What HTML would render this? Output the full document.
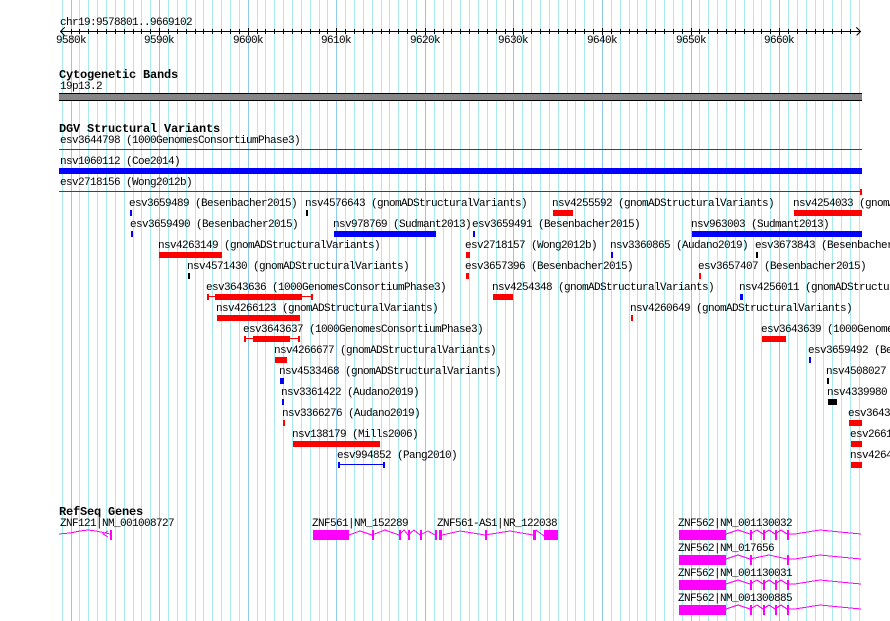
<!DOCTYPE html>
<html><head><meta charset="utf-8"><style>
html,body{margin:0;padding:0;background:#fff;width:890px;height:621px;overflow:hidden}
svg{display:block}
text{font-family:"Liberation Mono",monospace;font-size:11px;letter-spacing:-.6px;fill:#000;transform:translate(-1px,-1px)}
text.b{font-weight:bold;font-size:12px;letter-spacing:-.2px;transform:none}
text.l{transform:translate(0,-1px)}
text.t{transform:none}
.c rect,.c path,.c polyline{shape-rendering:crispEdges}
</style></head><body>
<svg class="c" width="890" height="621" viewBox="0 0 890 621" xmlns="http://www.w3.org/2000/svg">
<rect width="890" height="621" fill="#fff"/>
<path stroke="#a8ecf0" stroke-width="1" fill="none" d="M62.5 0V621M79.5 0V621M88.5 0V621M97.5 0V621M106.5 0V621M115.5 0V621M124.5 0V621M133.5 0V621M141.5 0V621M150.5 0V621M168.5 0V621M177.5 0V621M186.5 0V621M195.5 0V621M203.5 0V621M212.5 0V621M221.5 0V621M230.5 0V621M239.5 0V621M257.5 0V621M265.5 0V621M274.5 0V621M283.5 0V621M292.5 0V621M301.5 0V621M310.5 0V621M319.5 0V621M327.5 0V621M345.5 0V621M354.5 0V621M363.5 0V621M372.5 0V621M381.5 0V621M389.5 0V621M398.5 0V621M407.5 0V621M416.5 0V621M434.5 0V621M443.5 0V621M451.5 0V621M460.5 0V621M469.5 0V621M478.5 0V621M487.5 0V621M496.5 0V621M505.5 0V621M522.5 0V621M531.5 0V621M540.5 0V621M549.5 0V621M558.5 0V621M567.5 0V621M575.5 0V621M584.5 0V621M593.5 0V621M611.5 0V621M620.5 0V621M629.5 0V621M637.5 0V621M646.5 0V621M655.5 0V621M664.5 0V621M673.5 0V621M682.5 0V621M699.5 0V621M708.5 0V621M717.5 0V621M726.5 0V621M735.5 0V621M744.5 0V621M753.5 0V621M761.5 0V621M770.5 0V621M788.5 0V621M797.5 0V621M806.5 0V621M815.5 0V621M823.5 0V621M832.5 0V621M841.5 0V621M850.5 0V621M859.5 0V621"/>
<path stroke="#8fc8ec" stroke-width="1" fill="none" d="M71.5 0V621M159.5 0V621M248.5 0V621M336.5 0V621M425.5 0V621M513.5 0V621M602.5 0V621M691.5 0V621M779.5 0V621"/>

<!-- ruler -->
<rect x="60" y="31" width="801" height="1" fill="#000"/>
<path stroke="#000" fill="none" d="M71.5 29V34M79.5 29V34M88.5 29V34M97.5 29V34M106.5 29V34M115.5 29V34M124.5 29V34M133.5 29V34M141.5 29V34M150.5 29V34M159.5 28V35M168.5 29V34M177.5 29V34M186.5 29V34M195.5 29V34M203.5 29V34M212.5 29V34M221.5 29V34M230.5 29V34M239.5 29V34M248.5 28V35M257.5 29V34M265.5 29V34M274.5 29V34M283.5 29V34M292.5 29V34M301.5 29V34M310.5 29V34M319.5 29V34M327.5 29V34M336.5 28V35M345.5 29V34M354.5 29V34M363.5 29V34M372.5 29V34M381.5 29V34M389.5 29V34M398.5 29V34M407.5 29V34M416.5 29V34M425.5 28V35M434.5 29V34M443.5 29V34M451.5 29V34M460.5 29V34M469.5 29V34M478.5 29V34M487.5 29V34M496.5 29V34M505.5 29V34M513.5 28V35M522.5 29V34M531.5 29V34M540.5 29V34M549.5 29V34M558.5 29V34M567.5 29V34M575.5 29V34M584.5 29V34M593.5 29V34M602.5 28V35M611.5 29V34M620.5 29V34M629.5 29V34M637.5 29V34M646.5 29V34M655.5 29V34M664.5 29V34M673.5 29V34M682.5 29V34M691.5 28V35M699.5 29V34M708.5 29V34M717.5 29V34M726.5 29V34M735.5 29V34M744.5 29V34M753.5 29V34M761.5 29V34M770.5 29V34M779.5 28V35M788.5 29V34M797.5 29V34M806.5 29V34M815.5 29V34M823.5 29V34M832.5 29V34M841.5 29V34M850.5 29V34M60.5 31.5L64.5 27.5M60.5 31.5L64.5 35.5M860.5 31.5L856.5 27.5M860.5 31.5L856.5 35.5"/>
<text class="t" x="60" y="25">chr19:9578801..9669102</text>
<text class="l" x="56" y="44">9580k</text><text class="l" x="144" y="44">9590k</text><text class="l" x="233" y="44">9600k</text><text class="l" x="321" y="44">9610k</text><text class="l" x="410" y="44">9620k</text><text class="l" x="498" y="44">9630k</text><text class="l" x="587" y="44">9640k</text><text class="l" x="676" y="44">9650k</text><text class="l" x="764" y="44">9660k</text>

<!-- cytobands -->
<text class="b" x="59" y="78">Cytogenetic Bands</text>
<text class="l" x="60" y="90">19p13.2</text>
<rect x="59" y="93" width="803" height="8" fill="#000"/>
<rect x="59" y="94" width="803" height="6" fill="#868686"/>

<!-- DGV -->
<text class="b" x="59" y="132">DGV Structural Variants</text>
<text class="l" x="60" y="144">esv3644798 (1000GenomesConsortiumPhase3)</text>
<rect x="59" y="149" width="803" height="1" fill="#e00000"/>
<text class="l" x="60" y="165">nsv1060112 (Coe2014)</text>
<rect x="59" y="168" width="803" height="6" fill="#0000ff"/>
<text class="l" x="60" y="186">esv2718156 (Wong2012b)</text>
<rect x="59" y="191" width="803" height="1" fill="#e00000"/>
<rect x="860" y="189" width="2" height="6" fill="#ff0000"/>

<text x="130" y="207">esv3659489 (Besenbacher2015)</text><rect x="130" y="210" width="2" height="6" fill="#00f"/>
<text x="306" y="207">nsv4576643 (gnomADStructuralVariants)</text><rect x="306" y="210" width="2" height="6" fill="#000"/>
<text x="553" y="207">nsv4255592 (gnomADStructuralVariants)</text><rect x="553" y="210" width="20" height="6" fill="#f00"/>
<text x="794" y="207">nsv4254033 (gnomADStructuralVariants)</text><rect x="794" y="210" width="68" height="6" fill="#f00"/>

<text x="131" y="228">esv3659490 (Besenbacher2015)</text><rect x="131" y="231" width="2" height="6" fill="#00f"/>
<text x="334" y="228">nsv978769 (Sudmant2013)</text><rect x="334" y="231" width="102" height="6" fill="#00f"/>
<text x="473" y="228">esv3659491 (Besenbacher2015)</text><rect x="473" y="231" width="2" height="6" fill="#00f"/>
<text x="692" y="228">nsv963003 (Sudmant2013)</text><rect x="692" y="231" width="170" height="6" fill="#00f"/>

<text x="159" y="249">nsv4263149 (gnomADStructuralVariants)</text><rect x="159" y="252" width="63" height="6" fill="#f00"/>
<text x="466" y="249">esv2718157 (Wong2012b)</text><rect x="466" y="252" width="4" height="6" fill="#f00"/>
<text x="611" y="249">nsv3360865 (Audano2019)</text><rect x="611" y="252" width="2" height="6" fill="#00f"/>
<text x="756" y="249">esv3673843 (Besenbacher2015)</text><rect x="756" y="252" width="2" height="6" fill="#000"/>

<text x="188" y="270">nsv4571430 (gnomADStructuralVariants)</text><rect x="188" y="273" width="2" height="6" fill="#000"/>
<text x="466" y="270">esv3657396 (Besenbacher2015)</text><rect x="466" y="273" width="3" height="6" fill="#f00"/>
<text x="699" y="270">esv3657407 (Besenbacher2015)</text><rect x="699" y="273" width="2" height="6" fill="#f00"/>

<text x="207" y="291">esv3643636 (1000GenomesConsortiumPhase3)</text>
<rect x="208" y="296" width="104" height="1" fill="#f00"/><rect x="207" y="294" width="2" height="6" fill="#f00"/><rect x="311" y="294" width="2" height="6" fill="#f00"/><rect x="215" y="294" width="87" height="6" fill="#f00"/>
<text x="493" y="291">nsv4254348 (gnomADStructuralVariants)</text><rect x="493" y="294" width="20" height="6" fill="#f00"/>
<text x="740" y="291">nsv4256011 (gnomADStructuralVariants)</text><rect x="740" y="294" width="3" height="6" fill="#00f"/>

<text x="217" y="312">nsv4266123 (gnomADStructuralVariants)</text><rect x="217" y="315" width="83" height="6" fill="#f00"/>
<text x="631" y="312">nsv4260649 (gnomADStructuralVariants)</text><rect x="631" y="315" width="2" height="6" fill="#f00"/>

<text x="244" y="333">esv3643637 (1000GenomesConsortiumPhase3)</text>
<rect x="245" y="338" width="55" height="1" fill="#f00"/><rect x="244" y="336" width="2" height="6" fill="#f00"/><rect x="298" y="336" width="2" height="6" fill="#f00"/><rect x="253" y="336" width="37" height="6" fill="#f00"/>
<text x="762" y="333">esv3643639 (1000GenomesConsortiumPhase3)</text><rect x="762" y="336" width="24" height="6" fill="#f00"/>

<text x="275" y="354">nsv4266677 (gnomADStructuralVariants)</text><rect x="275" y="357" width="12" height="6" fill="#f00"/>
<text x="809" y="354">esv3659492 (Besenbacher2015)</text><rect x="809" y="357" width="2" height="6" fill="#00f"/>

<text x="280" y="375">nsv4533468 (gnomADStructuralVariants)</text><rect x="280" y="378" width="4" height="6" fill="#00f"/>
<text x="827" y="375">nsv4508027 (gnomADStructuralVariants)</text><rect x="827" y="378" width="2" height="6" fill="#000"/>

<text x="282" y="396">nsv3361422 (Audano2019)</text><rect x="282" y="399" width="2" height="6" fill="#00f"/>
<text x="828" y="396">nsv4339980 (gnomADStructuralVariants)</text><rect x="828" y="399" width="9" height="6" fill="#000"/>

<text x="283" y="417">nsv3366276 (Audano2019)</text><rect x="283" y="420" width="2" height="6" fill="#f00"/>
<text x="849" y="417">esv3643640 (1000GenomesConsortiumPhase3)</text><rect x="849" y="420" width="13" height="6" fill="#f00"/>

<text x="293" y="438">nsv138179 (Mills2006)</text><rect x="293" y="441" width="87" height="6" fill="#f00"/>
<text x="851" y="438">esv2661000 (Mills2006)</text><rect x="851" y="441" width="11" height="6" fill="#f00"/>

<text x="338" y="459">esv994852 (Pang2010)</text>
<rect x="339" y="464" width="45" height="1" fill="#00f"/><rect x="338" y="462" width="2" height="6" fill="#00f"/><rect x="383" y="462" width="2" height="6" fill="#00f"/>
<text x="851" y="459">nsv4264000 (gnomADStructuralVariants)</text><rect x="851" y="462" width="11" height="6" fill="#f00"/>

<!-- RefSeq -->
<text class="b" x="59" y="515">RefSeq Genes</text>
<text class="l" x="60" y="527">ZNF121|NM_001008727</text>
<g fill="none" stroke="#ff00ff">
<polyline points="59,534 70,533 80,531 88,530 96,531 110,534"/>
<polyline points="108,531 103,534 108,537"/>
</g>
<rect x="110" y="530" width="2" height="10" fill="#f0f"/>

<text x="313" y="527">ZNF561|NM_152289</text>
<text x="438" y="527">ZNF561-AS1|NR_122038</text>
<g fill="#f0f">
<rect x="313" y="530" width="36" height="10"/>
<rect x="372" y="530" width="2" height="10"/>
<rect x="399" y="530" width="2" height="10"/>
<rect x="408" y="530" width="2" height="10"/>
<rect x="420" y="530" width="2" height="10"/>
<rect x="435" y="530" width="2" height="10"/>
<rect x="439" y="530" width="3" height="10"/>
<rect x="485" y="530" width="2" height="10"/>
<rect x="533" y="530" width="3" height="10"/>
<rect x="544" y="530" width="14" height="10"/>
</g>
<g fill="none" stroke="#ff00ff">
<polyline points="349,535 360,531 372,535 385,530 399,535 404,530 408,535 414,530 420,535 428,531 435,535"/>
<polyline points="442,535 460,531 485,535 510,531 533,535"/>
<polyline points="536,530 544,536"/>
</g>

<text x="679" y="527">ZNF562|NM_001130032</text>
<text x="679" y="552">ZNF562|NM_017656</text>
<text x="679" y="577">ZNF562|NM_001130031</text>
<text x="679" y="602">ZNF562|NM_001300885</text>
<g fill="#f0f">
<rect x="679" y="530" width="47" height="10"/><rect x="750" y="530" width="2" height="10"/><rect x="763" y="530" width="2" height="10"/><rect x="775" y="530" width="2" height="10"/><rect x="787" y="530" width="2" height="10"/>
<rect x="679" y="555" width="47" height="10"/><rect x="750" y="555" width="2" height="10"/><rect x="787" y="555" width="2" height="10"/>
<rect x="679" y="580" width="47" height="10"/><rect x="750" y="580" width="2" height="10"/><rect x="763" y="580" width="2" height="10"/><rect x="775" y="580" width="2" height="10"/><rect x="787" y="580" width="2" height="10"/>
<rect x="679" y="605" width="47" height="10"/><rect x="750" y="605" width="2" height="10"/><rect x="763" y="605" width="2" height="10"/><rect x="775" y="605" width="2" height="10"/><rect x="787" y="605" width="2" height="10"/>
</g>
<g fill="none" stroke="#ff00ff">
<polyline points="726,534 738,530 750,534 757,530 763,534 769,530 775,534 781,530 787,534 795,534 820,530 840,532 861,534"/>
<polyline points="726,559 738,555 750,559 769,555 787,559 795,559 820,555 840,557 861,559"/>
<polyline points="726,584 738,580 750,584 757,580 763,584 769,580 775,584 781,580 787,584 795,584 820,580 840,582 861,584"/>
<polyline points="726,609 738,605 750,609 757,605 763,609 769,605 775,609 781,605 787,609 795,609 820,605 840,607 861,609"/>
</g>
</svg>
</body></html>
